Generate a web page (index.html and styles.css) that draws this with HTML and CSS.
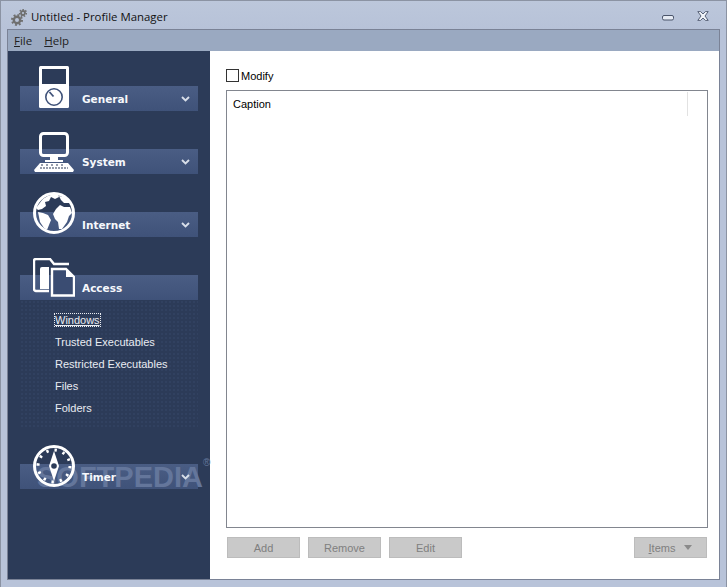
FILE: index.html
```html
<!DOCTYPE html>
<html lang="en">
<head>
<meta charset="utf-8">
<title>Untitled - Profile Manager</title>
<link rel="stylesheet" href="styles.css">
</head>
<body>
<div class="window">
  <header class="titlebar">
    <svg class="app-icon" width="16" height="17" viewBox="0 0 16 17">
      <g fill="none" stroke="#6f6f6f">
        <circle cx="6" cy="11" r="3.2" stroke-width="2.4"/>
        <circle cx="6" cy="11" r="5" stroke-width="2" stroke-dasharray="1.9 2"/>
        <circle cx="12" cy="4" r="2" stroke-width="1.8"/>
        <circle cx="12" cy="4" r="3.4" stroke-width="1.6" stroke-dasharray="1.5 1.5"/>
      </g>
    </svg>
    <span class="title">Untitled - Profile Manager</span>
    <div class="controls">
      <svg class="ctl-min" width="12" height="6" viewBox="0 0 12 6"><rect x=".5" y=".5" width="11" height="4.5" rx="1.5" fill="#e6ebf4" stroke="#4b556b"/></svg>
      <svg class="ctl-close" width="12" height="10" viewBox="0 0 12 10"><path d="M.8.6H3.6L6 3 8.4.6H11.2L8 5 11.2 9.4H8.4L6 7 3.6 9.4H.8L4 5Z" fill="#f1f4f9" stroke="#4b556b" stroke-width=".9"/></svg>
    </div>
  </header>
  <div class="frame">
    <nav class="menubar">
      <span class="menu"><u>F</u>ile</span>
      <span class="menu"><u>H</u>elp</span>
    </nav>
    <div class="main">
      <aside class="sidebar">
        <section class="group">
          <svg class="group-icon icon-general" width="30" height="42" viewBox="0 0 30 42">
            <rect width="30" height="42" rx="1.5" fill="#fff"/>
            <rect x="3" y="3" width="24" height="15" fill="#2c3b58"/>
            <circle cx="15" cy="31" r="8.2" fill="none" stroke="#3f5279" stroke-width="1.6"/>
            <path d="M14.5 30.5L10.5 26" stroke="#3f5279" stroke-width="1.8"/>
          </svg>
          <div class="bar"><span class="bar-label">General</span><svg class="chev" width="9" height="6" viewBox="0 0 9 6"><path d="M1 1L4.5 4.5 8 1" fill="none" stroke="#d8dee9" stroke-width="1.9"/></svg></div>
        </section>
        <section class="group">
          <svg class="group-icon icon-system" width="40" height="40" viewBox="0 0 40 40">
            <rect x="6.5" y="1.5" width="27" height="22" rx="3" fill="none" stroke="#fff" stroke-width="3"/>
            <path d="M16 25h8v3h5v2H11v-2h5Z" fill="#fff"/>
            <path d="M6 31h28l6 7-1 2H1l-1-2Z" fill="#fff"/>
            <path d="M7 33h3M12 33h3M17 33h3M22 33h3M27 33h3M6 36h28" stroke="#2c3b58" stroke-width="1.2" stroke-dasharray="2 1"/>
          </svg>
          <div class="bar"><span class="bar-label">System</span><svg class="chev" width="9" height="6" viewBox="0 0 9 6"><path d="M1 1L4.5 4.5 8 1" fill="none" stroke="#d8dee9" stroke-width="1.9"/></svg></div>
        </section>
        <section class="group">
          <svg class="group-icon icon-internet" width="42" height="42" viewBox="0 0 42 42">
            <circle cx="21" cy="21" r="19.5" fill="none" stroke="#fff" stroke-width="3"/>
            <path d="M9 8C13 4 19 2 25 2L26 5 22 7 18 5 16 9 12 10 13 14 9 17 5 18 3 16Z" fill="#fff"/>
            <path d="M5 20L10 21 15 23 18 28 16 33 14 38 11 36 7 30Z" fill="#fff"/>
            <path d="M23 17L27 13 31 15 37 15 39 21 36 24 34 30 29 37 26 37 25 30 22 27 20 22Z" fill="#fff"/>
            <path d="M26 4L32 5 37 11 31 11 28 8Z" fill="#fff"/>
          </svg>
          <div class="bar"><span class="bar-label">Internet</span><svg class="chev" width="9" height="6" viewBox="0 0 9 6"><path d="M1 1L4.5 4.5 8 1" fill="none" stroke="#d8dee9" stroke-width="1.9"/></svg></div>
        </section>
        <section class="group group-open">
          <svg class="group-icon icon-access" width="42" height="39" viewBox="0 0 42 39">
            <path d="M16 33H3a2 2 0 0 1-2-2V3a2 2 0 0 1 2-2H17l4 5H36" fill="none" stroke="#fff" stroke-width="2.4"/>
            <path d="M7 11a2 2 0 0 1 2-2H16v22H7Z" fill="#fff"/>
            <path d="M19 11H33L41 19V37.5H19Z" fill="#3a4c72" stroke="#fff" stroke-width="2.4"/>
            <path d="M33 11V19H41Z" fill="#fff"/>
          </svg>
          <div class="bar"><span class="bar-label">Access</span></div>
          <ul class="sublist">
            <li class="subitem"><span class="focused">Windows</span></li>
            <li class="subitem">Trusted Executables</li>
            <li class="subitem">Restricted Executables</li>
            <li class="subitem">Files</li>
            <li class="subitem">Folders</li>
          </ul>
        </section>
        <section class="group">
          <span class="watermark">SOFTPEDIA<sup class="reg">®</sup></span>
          <div class="bar"><span class="bar-label">Timer</span><svg class="chev" width="9" height="6" viewBox="0 0 9 6"><path d="M1 1L4.5 4.5 8 1" fill="none" stroke="#d8dee9" stroke-width="1.9"/></svg></div>
          <svg class="group-icon icon-timer" width="42" height="42" viewBox="0 0 42 42">
            <circle cx="21" cy="21" r="19.5" fill="none" stroke="#fff" stroke-width="3"/>
            <circle cx="21" cy="21" r="16" fill="none" stroke="#fff" stroke-width="3" stroke-dasharray="2.4 5.98"/>
            <path d="M21 6L26 21 21 36 16 21Z" fill="#fff"/>
            <circle cx="21" cy="21" r="2.8" fill="#2c3b58"/>
          </svg>
        </section>
      </aside>
      <main class="content">
        <label class="check-row"><span class="checkbox"></span>Modify</label>
        <div class="listbox">
          <div class="list-head"><span class="col-caption">Caption</span><span class="col-rest"></span></div>
        </div>
        <div class="actions">
          <div class="btn-group">
            <button class="btn" disabled>Add</button>
            <button class="btn" disabled>Remove</button>
            <button class="btn" disabled>Edit</button>
          </div>
          <button class="btn" disabled><u>I</u>tems<svg class="btn-arrow" width="8" height="5" viewBox="0 0 8 5"><path d="M0 0H8L4 5Z" fill="#8a8a8a"/></svg></button>
        </div>
      </main>
    </div>
  </div>
</div>
</body>
</html>
```
FILE: styles.css
```css
* { box-sizing: border-box; }
html, body { margin: 0; padding: 0; }
body {
  width: 727px;
  height: 587px;
  overflow: hidden;
  font-family: "Liberation Sans", Arial, sans-serif;
  font-size: 11px;
  color: #000;
}
.window {
  width: 727px;
  height: 587px;
  display: flex;
  flex-direction: column;
  background: #b8c3d9;
  border: 1px solid #8b93a3;
  border-bottom: 0;
  padding: 0 6px 7px;
}
.titlebar {
  height: 28px;
  flex: none;
  display: flex;
  align-items: center;
  background: linear-gradient(#bcc7db, #b7c2d8);
  margin: 0 -6px;
  padding: 2px 17px 0 10px;
}
.app-icon { flex: none; margin-top: 3px; }
.title {
  margin-left: 4px;
  font-family: "Open Sans", sans-serif;
  font-size: 11.4px;
  color: #111;
}
.controls { margin-left: auto; display: flex; align-items: center; gap: 23px; }
.ctl-min { margin-top: 4px; }
.ctl-close { margin-top: -1px; }
.frame {
  flex: 1;
  min-height: 0;
  display: flex;
  flex-direction: column;
  border: 1px solid #7a8296;
}
.menubar {
  height: 21px;
  flex: none;
  display: flex;
  align-items: center;
  gap: 12px;
  padding-left: 6px;
  background: #9aa9c1;
  font-family: "Open Sans", sans-serif;
  font-size: 11.5px;
  color: #222;
}
.main { flex: 1; min-height: 0; display: flex; }
.sidebar {
  width: 202px;
  flex: none;
  background: #2c3b58;
  padding: 35px 12px 0;
}
.group { position: relative; margin-bottom: 38px; }
.group-open { margin-bottom: 35px; }
.bar {
  height: 25px;
  display: flex;
  align-items: center;
  justify-content: space-between;
  padding: 0 8px 0 62px;
  background: linear-gradient(#4a5d84, #3f5279);
}
.bar-label {
  position: relative;
  z-index: 2;
  font-family: "DejaVu Sans", sans-serif;
  font-weight: 700;
  font-size: 10.5px;
  color: #f6f8fc;
}
.chev { flex: none; position: relative; z-index: 2; }
.group-icon { position: absolute; left: 13px; z-index: 2; }
.icon-general { left: 19px; top: -20px; }
.icon-system { left: 14px; top: -17px; }
.icon-internet { top: -20px; }
.icon-access { top: -17px; }
.icon-timer { top: -19px; }
.sublist {
  list-style: none;
  margin: 0;
  padding: 9px 0 10px 35px;
  background-color: #2c3b58;
  background-image: radial-gradient(#314160 1px, transparent 1px);
  background-size: 4px 4px;
}
.subitem {
  height: 22px;
  display: flex;
  align-items: center;
  color: #e9ecf2;
  font-family: "Liberation Sans", sans-serif;
  font-size: 11px;
}
.focused {
  outline: 1px dotted #e9ecf2;
  text-decoration: underline;
}
.watermark {
  position: absolute;
  left: 17px;
  top: -5px;
  font-family: "Liberation Sans", sans-serif;
  font-weight: 700;
  font-size: 29px;
  line-height: 36px;
  white-space: nowrap;
  color: #64769b;
  z-index: 1;
  pointer-events: none;
}
.reg { font-size: 10px; position: absolute; top: -2px; line-height: 12px; font-weight: 400; }
.content {
  flex: 1;
  min-width: 0;
  display: flex;
  flex-direction: column;
  background: #fff;
  padding: 18px 11px 21px 16px;
}
.check-row { display: flex; align-items: center; height: 13px; gap: 2px; margin-bottom: 8px; }
.checkbox {
  width: 13px;
  height: 13px;
  flex: none;
  border: 1px solid #333;
  background: #fff;
}
.listbox {
  flex: 1;
  min-height: 0;
  border: 1px solid #82868f;
  margin-bottom: 9px;
}
.list-head { display: flex; height: 25px; padding-top: 1px; }
.col-caption {
  flex: 1;
  padding-left: 6px;
  line-height: 24px;
  border-right: 1px solid #e2e2e2;
}
.col-rest { width: 19px; flex: none; }
.actions { display: flex; justify-content: space-between; padding: 0 1px; }
.btn-group { display: flex; gap: 8px; }
.btn {
  width: 73px;
  height: 21px;
  padding: 0;
  display: flex;
  align-items: center;
  justify-content: center;
  background: #c9c9c9;
  border: 1px solid #bcbcbc;
  color: #7f7f7f;
  font-family: "Liberation Sans", sans-serif;
  font-size: 11px;
}
.btn-arrow { margin-left: 9px; }
```
